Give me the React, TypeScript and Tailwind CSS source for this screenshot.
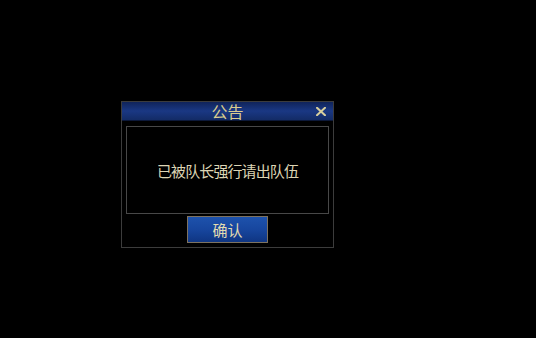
import React from "react";

export default function App() {
  return (
    <div className="w-[536px] h-[338px] bg-black overflow-hidden" style={{ fontFamily: '"Noto Sans CJK SC", "Noto Sans", sans-serif' }}>
      <div className="ml-[121px] pt-[101px]">
        <div className="w-[213px] h-[147px] border border-[#3c3c3c] bg-black flex flex-col">
          <div className="relative h-[19px] bg-gradient-to-b from-[#10245a] via-[#1a3884] to-[#132b66] border-b border-[#0c1838] flex items-center justify-center">
            <span className="text-[16px] leading-none text-[#d9cc8f]">公告</span>
            <svg className="absolute right-[7px] top-[5px]" width="10" height="9" viewBox="0 0 10 9">
              <path d="M1 0.8 L9 8.2 M9 0.8 L1 8.2" stroke="#d8cf9e" strokeWidth="2" strokeLinecap="square" />
            </svg>
          </div>
          <div className="mx-[4px] mt-[5px] h-[88px] border border-[#484848] flex items-center justify-center">
            <span className="text-[15px] leading-none tracking-[-0.9px] text-[#ddd5b4]">已被队长强行请出队伍</span>
          </div>
          <div className="flex justify-center mt-[2px]">
            <div className="w-[81px] h-[27px] border border-[#7d7260] bg-gradient-to-b from-[#1d52ac] via-[#17469e] to-[#0f3582] flex items-center justify-center">
              <span className="text-[15px] leading-none text-[#e3dcb0]">确认</span>
            </div>
          </div>
        </div>
      </div>
    </div>
  );
}
